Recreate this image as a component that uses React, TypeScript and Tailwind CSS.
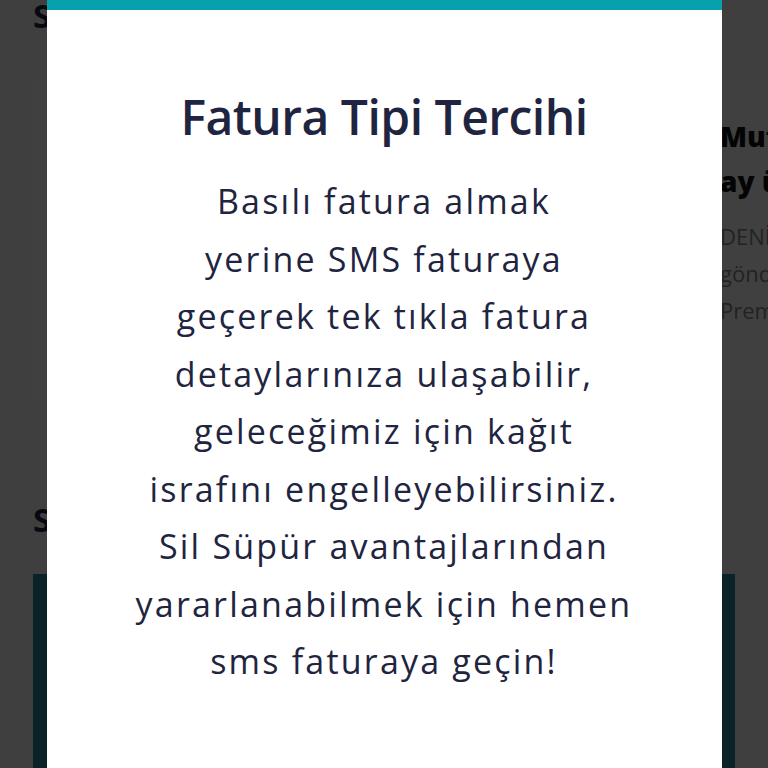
const lines = [
  'Basılı fatura almak',
  'yerine SMS faturaya',
  'geçerek tek tıkla fatura',
  'detaylarınıza ulaşabilir,',
  'geleceğimiz için kağıt',
  'israfını engelleyebilirsiniz.',
  'Sil Süpür avantajlarından',
  'yararlanabilmek için hemen',
  'sms faturaya geçin!',
];

function BackgroundPage() {
  return (
    <div className="h-[768px] overflow-hidden bg-[#fbfbfb] px-[33px] font-['Open_Sans',sans-serif]">
      <h2 className="-mt-[6px] text-[33px] font-bold leading-[44px] text-[#1e2540]">Size Özel Fırsatlar</h2>
      <div className="mt-[42px] flex gap-[16px]">
        <div className="h-[320px] w-[657px] shrink-0 bg-white" />
        <div className="h-[320px] w-[657px] shrink-0 bg-white px-[14px] pt-[34px]">
          <p className="text-[28px] font-extrabold leading-[45px] text-[#111]">Mutlu Eden Fırsatlar</p>
          <p className="text-[28px] font-extrabold leading-[45px] text-[#111]">ay ücretsiz</p>
          <p className="mt-[14px] text-[22px] leading-[37px] text-[#8a8a8a]">DENİZBANK kartınla</p>
          <p className="text-[22px] leading-[37px] text-[#8a8a8a]">gönderilen SMS ile</p>
          <p className="text-[22px] leading-[37px] text-[#8a8a8a]">Premium üyelik</p>
        </div>
      </div>
      <h2 className="mt-[98px] text-[33px] font-bold leading-[44px] text-[#1e2540]">Sil Süpür</h2>
      <div className="mt-[32px] h-[300px] bg-[#288ca4]" />
    </div>
  );
}

export default function App() {
  return (
    <div className="relative h-[768px] w-[768px] overflow-hidden">
      <BackgroundPage />
      <div className="absolute inset-0 flex justify-center bg-black/75">
        <div className="w-[675px] shrink-0 bg-white font-['Open_Sans',sans-serif] text-[#1f2540]">
          <div className="h-[10px] bg-[#06a0af]" />
          <h1 className="mt-[77px] text-center text-[48px] font-semibold leading-[60px] tracking-[-0.5px]">
            Fatura Tipi Tercihi
          </h1>
          <p className="mt-[26px] whitespace-nowrap text-center text-[34px] leading-[57.5px] tracking-[2.2px]">
            {lines.map((l, i) => (
              <span key={i}>
                {l}
                <br />
              </span>
            ))}
          </p>
        </div>
      </div>
    </div>
  );
}
